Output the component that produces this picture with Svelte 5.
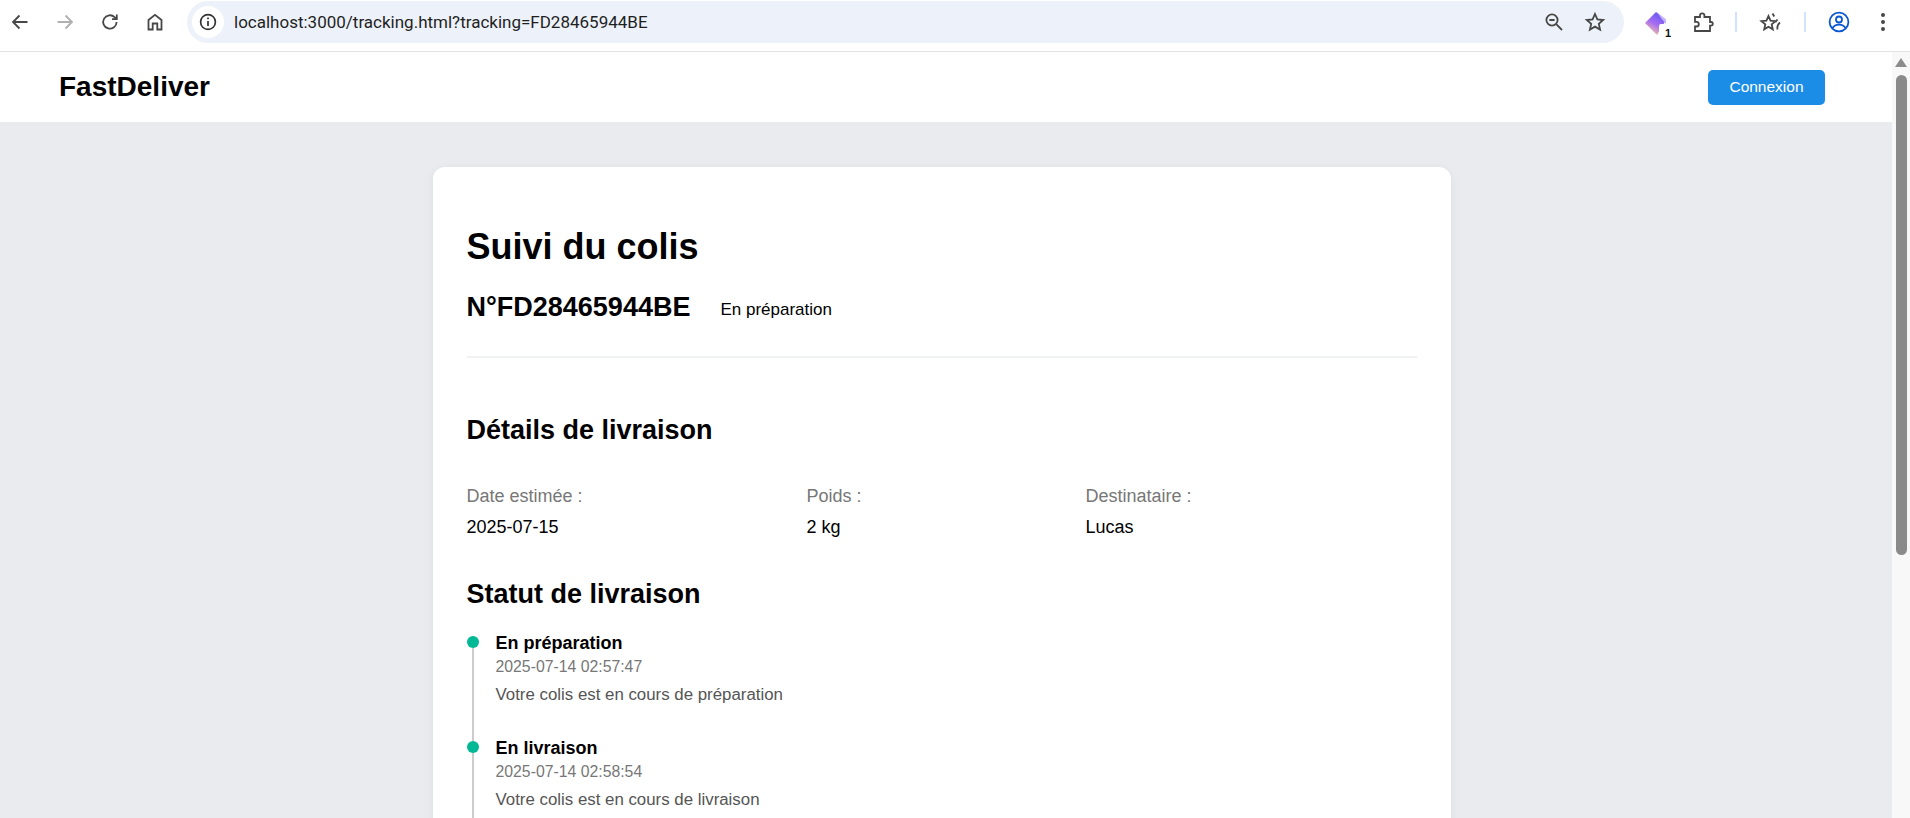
<script>
	const details = [
		{ label: 'Date estimée :', value: '2025-07-15' },
		{ label: 'Poids :', value: '2 kg' },
		{ label: 'Destinataire :', value: 'Lucas' }
	];

	const steps = [
		{ title: 'En préparation', date: '2025-07-14 02:57:47', text: 'Votre colis est en cours de préparation' },
		{ title: 'En livraison', date: '2025-07-14 02:58:54', text: 'Votre colis est en cours de livraison' }
	];
</script>

<div class="window">
	<header class="toolbar">
		<div class="nav-icons">
			<svg width="24" height="24" viewBox="0 0 24 24" class="ic"><path d="M19.500 12H5M11.500 5.500 5 12l6.500 6.500" /></svg>
			<svg width="24" height="24" viewBox="0 0 24 24" class="ic off"><path d="M4.500 12H19M12.500 5.500 19 12l-6.500 6.500" /></svg>
			<svg width="24" height="24" viewBox="0 0 24 24" class="ic"><path d="M18.600 12a6.700 6.700 0 1 1-2-4.800L18.600 9M18.800 4.400V9.200H14" /></svg>
			<svg width="24" height="24" viewBox="0 0 24 24" class="ic"><path d="M5.500 19.500V10L12 4.800l6.500 5.200v9.500h-4.200v-6H9.700v6z" /></svg>
		</div>
		<div class="omnibox">
			<span class="info">
				<svg width="20" height="20" viewBox="0 0 20 20" class="ic thin"><circle cx="10" cy="10" r="7.400" /><path d="M10 9v5M10 5.600v1.600" /></svg>
			</span>
			<span class="url">localhost:3000/tracking.html?tracking=FD28465944BE</span>
			<svg width="24" height="24" viewBox="0 0 24 24" class="ic zoom"><circle cx="10" cy="10" r="5.600" /><path d="M7.400 10h5.200M14.200 14.200 20 20" /></svg>
			<svg width="24" height="24" viewBox="0 0 24 24" class="ic star"><path d="m12 4 2.400 5.400 5.800.6-4.400 3.900 1.300 5.700-5.100-3-5.100 3 1.300-5.700L3.800 10l5.800-.6z" /></svg>
		</div>
		<div class="ext-icons">
			<span class="gem">
				<svg width="26" height="26" viewBox="0 0 26 26">
					<defs>
						<linearGradient id="gem" x1="0.8" y1="0" x2="0.3" y2="1">
							<stop offset="0" stop-color="#5a55f2" />
							<stop offset="0.55" stop-color="#a66cf2" />
							<stop offset="1" stop-color="#fcc99c" />
						</linearGradient>
					</defs>
					<path d="M12 2 22 10 13 25 1 13z" fill="url(#gem)" />
					<path d="M13 2 22 9.500V14L17 8z" fill="#c4b5f8" />
					<rect x="15" y="14" width="11" height="12" rx="2" fill="#fff" />
				</svg>
				<span class="badge">1</span>
			</span>
			<svg width="24" height="24" viewBox="0 0 24 24" class="ic puzzle"><path d="M4 7h5V5.500a2.200 2.200 0 0 1 4.400 0V7H19v5h1a1.800 1.800 0 0 1 0 3.600h-1V21H4v-4.500h1.500a2.300 2.300 0 0 0 0-4.600H4z" /></svg>
			<i class="sep"></i>
			<svg width="26" height="24" viewBox="0 0 26 24" class="ic starlist"><path d="m10.500 6 2 4.600 5 .5-3.800 3.300 1.100 4.900-4.300-2.600-4.300 2.600 1.100-4.900L3.400 11.100l5-.5zM14.500 3.500l1.800 3M19.500 9.500l-2 2.500M22 12.500c-2 1.500-3 4-2.500 7" /></svg>
			<i class="sep sep2"></i>
			<svg width="24" height="24" viewBox="0 0 24 24" class="ic profile"><circle cx="12" cy="12" r="9.400" /><circle cx="12" cy="9.500" r="3" /><path d="M5.500 18c1.500-2.500 3.500-3.400 6.500-3.400s5 .9 6.500 3.400" /></svg>
			<span class="dots"><i></i><i></i><i></i></span>
		</div>
	</header>

	<div class="viewport">
		<div class="page">
			<nav class="topbar">
				<span class="brand">FastDeliver</span>
				<button class="login">Connexion</button>
			</nav>

			<main class="card">
				<h1>Suivi du colis</h1>
				<div class="tracking">
					<h2 class="number">N°FD28465944BE</h2>
					<span class="status">En préparation</span>
				</div>

				<section class="details">
					<h2>Détails de livraison</h2>
					<div class="grid">
						{#each details as d}
							<div>
								<p class="label">{d.label}</p>
								<p class="value">{d.value}</p>
							</div>
						{/each}
					</div>
				</section>

				<section>
					<h2>Statut de livraison</h2>
					<ul class="timeline">
						{#each steps as s}
							<li>
								<strong>{s.title}</strong>
								<span class="date">{s.date}</span>
								<span class="desc">{s.text}</span>
							</li>
						{/each}
					</ul>
				</section>
			</main>
		</div>

		<div class="scrollbar">
			<i class="arrow"></i>
			<i class="thumb"></i>
		</div>
	</div>
</div>

<style>
	:global(body) {
		margin: 0;
		overflow: hidden;
		font-family: "Liberation Sans", Arial, sans-serif;
	}

	.window {
		width: 1910px;
		height: 818px;
		display: flex;
		flex-direction: column;
		overflow: hidden;
		background: #fff;
	}

	.toolbar {
		flex: none;
		height: 51px;
		display: flex;
		align-items: flex-start;
		border-bottom: 1px solid #e3e3e3;
		background: #fff;
	}

	.ic {
		fill: none;
		stroke: #474747;
		stroke-width: 1.8;
		flex: none;
	}

	.ic.off {
		stroke: #b0b0b0;
	}

	.ic.thin {
		stroke-width: 1.7;
		stroke: #333;
	}

	.nav-icons {
		display: flex;
		gap: 21px;
		padding: 10px 0 0 8px;
		width: 187px;
		box-sizing: border-box;
	}

	.omnibox {
		width: 1437px;
		height: 42px;
		margin-top: 1px;
		border-radius: 21px;
		background: #edf2fa;
		display: flex;
		align-items: center;
		padding: 0 17px 0 5px;
		box-sizing: border-box;
	}

	.info {
		width: 32px;
		height: 32px;
		border-radius: 50%;
		background: #fff;
		display: flex;
		align-items: center;
		justify-content: center;
		flex: none;
	}

	.url {
		font-family: Roboto, sans-serif;
		font-size: 17px;
		color: #1f1f1f;
		margin-left: 10px;
		flex: 1;
	}

	.zoom {
		margin-right: 17px;
	}

	.ext-icons {
		display: flex;
		align-items: center;
		padding: 10px 0 0 20px;
		gap: 0;
	}

	.gem {
		position: relative;
		width: 24px;
		height: 24px;
		flex: none;
	}

	.badge {
		position: absolute;
		right: -3px;
		bottom: -5px;
		font-size: 11px;
		font-weight: 700;
		color: #111;
	}

	.puzzle {
		margin-left: 23px;
	}

	.sep {
		width: 2px;
		height: 20px;
		background: #d3e3fd;
		flex: none;
		margin: 0 20px;
	}

	.sep2 {
		margin: 0 21px 0 19px;
	}

	.starlist {
		margin: 0 1px;
	}

	.profile {
		stroke: #0b57d0;
	}

	.dots {
		display: flex;
		flex-direction: column;
		gap: 3px;
		margin-left: 30px;
	}

	.dots i {
		width: 4px;
		height: 4px;
		border-radius: 50%;
		background: #474747;
	}

	.viewport {
		flex: 1;
		display: flex;
		min-height: 0;
	}

	.page {
		flex: 1;
		min-width: 0;
		overflow: hidden;
		background: #e9ebef;
	}

	.topbar {
		height: 70px;
		background: #fff;
		display: flex;
		align-items: center;
		justify-content: space-between;
		padding: 0 67px 0 59px;
	}

	.brand {
		font-size: 28px;
		font-weight: 700;
		color: #000;
	}

	.login {
		width: 117px;
		height: 35px;
		border: none;
		border-radius: 5px;
		background: #1b8de6;
		color: #fff;
		font-family: inherit;
		font-size: 15.500px;
	}

	.card {
		width: 1018px;
		margin: 45px 0 0 433px;
		box-sizing: border-box;
		padding: 59px 34px 48px 33.500px;
		background: #fff;
		border-radius: 12px;
		box-shadow: 0 2px 10px rgba(0, 0, 0, 0.06);
	}

	h1 {
		margin: 0;
		font-size: 36px;
		line-height: 42px;
		color: #000;
	}

	h2 {
		margin: 0;
		font-size: 27px;
		line-height: 32px;
		color: #000;
	}

	.tracking {
		display: flex;
		align-items: center;
		gap: 30px;
		margin-top: 23px;
		padding-bottom: 33px;
		border-bottom: 2px solid #f0f1f3;
	}

	.number {
		font-size: 27px;
	}

	.status {
		font-size: 17px;
		color: #000;
		margin-top: 6px;
	}

	.details {
		margin-top: 56px;
	}

	.grid {
		display: grid;
		grid-template-columns: 340px 279px 1fr;
		margin-top: 40px;
		margin-bottom: 41px;
	}

	.label {
		margin: 0;
		font-size: 18px;
		line-height: 20px;
		color: #777;
	}

	.value {
		margin: 11px 0 0;
		font-size: 18px;
		line-height: 20px;
		color: #000;
	}

	.timeline {
		list-style: none;
		margin: 23px 0 0;
		padding: 0;
	}

	.timeline li {
		position: relative;
		display: flex;
		flex-direction: column;
		height: 105px;
		padding-left: 29px;
	}

	.timeline li::before {
		content: '';
		position: absolute;
		left: 0;
		top: 3px;
		width: 12px;
		height: 12px;
		border-radius: 50%;
		background: #00b894;
	}

	.timeline li::after {
		content: '';
		position: absolute;
		left: 5px;
		top: 15px;
		bottom: -3px;
		width: 2px;
		background: #ccc;
	}

	.timeline strong {
		font-size: 18px;
		line-height: 20px;
		color: #000;
	}

	.date {
		font-size: 15.800px;
		line-height: 18px;
		margin-top: 5px;
		color: #777;
	}

	.desc {
		font-size: 16.850px;
		line-height: 20px;
		margin-top: 9px;
		color: #555;
	}

	.scrollbar {
		flex: none;
		width: 18px;
		background: #f8f8f8;
		position: relative;
	}

	.arrow {
		position: absolute;
		left: 3px;
		top: 6px;
		border-left: 6px solid transparent;
		border-right: 6px solid transparent;
		border-bottom: 9px solid #8c8c8c;
	}

	.thumb {
		position: absolute;
		left: 4px;
		top: 23px;
		width: 11px;
		height: 480px;
		border-radius: 6px;
		background: #8a8a8a;
	}
</style>
